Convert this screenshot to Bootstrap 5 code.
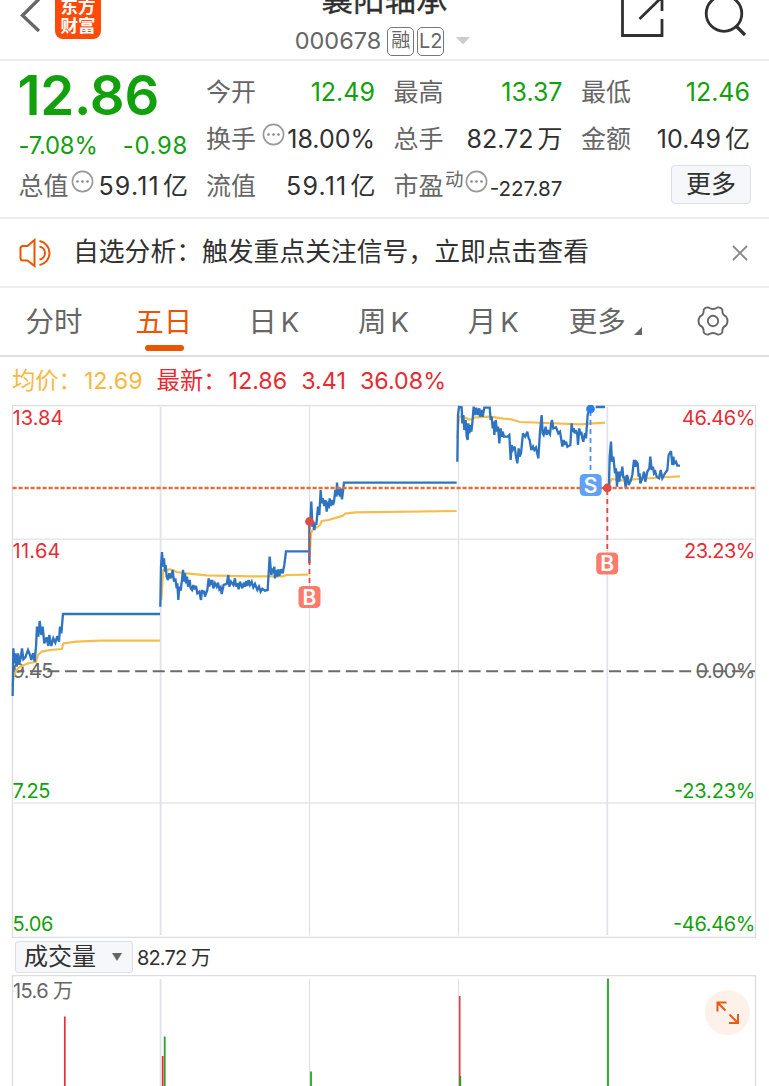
<!DOCTYPE html>
<html lang="zh-CN">
<head>
<meta charset="utf-8">
<meta name="viewport" content="width=device-width, initial-scale=1">
<title>襄阳轴承 000678</title>
<link href="https://cdn.jsdelivr.net/npm/bootstrap@5.3.0/dist/css/bootstrap.min.css" rel="stylesheet">
<style>
body{font-family:Inter,"Noto Sans CJK SC",sans-serif;color:#303030;height:1086px;overflow:hidden;background:#fff}
svg{display:block;flex:none}
.c-up{color:#e62c33}.c-down{color:#12a10d}.c-grey{color:#666}.c-avg{color:#f8b83f}
.topbar{height:61px;border-bottom:2px solid #ebebeb}
.side{width:210px}
.logo{width:46px;height:46px;border-radius:8px;background:#ff4a0a;color:#fff;font-size:17.5px;line-height:19px;font-weight:700;padding-top:4px;margin:0 0 20px 14px}
.stock-name{font-size:31.5px;line-height:36px;font-weight:400;-webkit-text-stroke:.3px #303030;margin-bottom:8px}
.stock-code{height:30px;gap:3px;margin-bottom:3px}
.code-num{font-size:23.5px;line-height:30px;margin-right:4px}
.tagbox{border:1.5px solid #777;border-radius:5px;height:29px;width:27px;font-size:19px;line-height:26px;text-align:center;position:relative;right:1px}
.tagbox.lv{font-size:20px;line-height:27px}
.quote{height:158px;border-bottom:2px solid #ededed;padding:8px 19px 0 18.5px;gap:18.6px}
.qcol{flex:1 1 0;min-width:0}
.qrow{height:47px;font-size:25px;line-height:47px;white-space:nowrap}
.wide{letter-spacing:1.2px;margin-right:-.5px}
.unit{margin-left:3px;letter-spacing:0}
.price{font-size:54.5px;line-height:52px;font-weight:600;height:60px;white-space:nowrap;letter-spacing:-.2px;margin-left:-1px}
.chg{font-size:23.8px;height:34px;line-height:33px;letter-spacing:-.2px}
.chg .amt{letter-spacing:.7px;margin-right:-.4px}
.pe{font-size:20.6px;padding-top:4px}
.sup{font-size:18.5px;margin-top:-14px}
.dots{margin-top:-10px}
.btn-more{width:80px;height:39px;margin:-4px -1px 0 0;font-size:25px;line-height:35px;background:#f5f7fa;border:1.5px solid #dcdfe4;border-radius:4px;color:#303030}
.notice{height:69px;border-bottom:2px solid #ededed;padding:0 20px 0 19px;font-size:25.8px}
.tabs{display:grid;grid-template-columns:repeat(7,1fr);height:69px;border-bottom:2px solid #dedede;font-size:28.5px}
.tabs>div{display:flex;justify-content:center;align-items:center;position:relative;white-space:nowrap;right:1px;padding-top:2px}
.tabs .k{margin-left:4px;font-size:27.5px}
.tabs .on{color:#ea5504}
.tabs .on::after{content:"";position:absolute;bottom:4px;left:50%;width:39px;height:6px;margin-left:-19px;border-radius:3px;background:#ea5504}
.legend-row{height:48px;padding-left:12px;font-size:23.3px;white-space:nowrap}
.legend-row .gap-s{margin-right:14px}
.legend-row .lab{margin-right:2px}
.volbar{height:37px;padding-left:15px}
.picker{width:118px;height:32px;background:#f5f7fa;border:1.5px solid #dcdfe4;border-radius:3px;font-size:24px;line-height:30px;padding:1px 10px 0 8px}
.expand{width:45px;height:45px;border-radius:50%;background:#fdf1e9;top:15px;right:19.5px}
svg text{font-family:Inter,"Noto Sans CJK SC",sans-serif}
</style>
</head>
<body>
<header class="topbar d-flex justify-content-between align-items-end">
  <div class="side d-flex align-items-end">
    <svg width="41" height="61" viewBox="0 0 41 61"><path d="M39 1 22.500 17.500 39 33" fill="none" stroke="#666" stroke-width="3.300"/></svg>
    <div class="logo text-center">东方<br>财富</div>
  </div>
  <div class="d-flex flex-column align-items-center">
    <div class="stock-name">襄阳轴承</div>
    <div class="stock-code d-flex align-items-center c-grey">
      <span class="code-num">000678</span><span class="tagbox">融</span><span class="tagbox lv">L2</span>
      <svg class="ms-2" width="18" height="8" viewBox="0 0 18 8"><path d="M0 0h14L7 7.500z" fill="#ccc"/></svg>
    </div>
  </div>
  <div class="side d-flex justify-content-end">
    <svg width="148" height="59" viewBox="621 0 148 59" fill="none" stroke="#303030" stroke-width="2.800"><path d="M622.500-5V35.500H662V19M662 11V-6M639.500 19 662-3"/><circle cx="724" cy="13.500" r="17.800"/><path d="m735.500 25.500 9.500 9.500" stroke-width="3.200"/></svg>
  </div>
</header>

<section class="quote d-flex">
  <div class="qcol">
    <div class="price c-down">12.86</div>
    <div class="chg d-flex justify-content-between c-down"><span>-7.08%</span><span class="amt">-0.98</span></div>
    <div class="qrow d-flex align-items-center"><span class="c-grey">总值</span><svg class="dots ms-auto" width="23" height="23" viewBox="0 0 23 23"><use href="#dots"/></svg><span class="wide ms-1">59.11<span class="unit">亿</span></span></div>
  </div>
  <div class="qcol">
    <div class="qrow d-flex justify-content-between"><span class="c-grey">今开</span><span class="c-down">12.49</span></div>
    <div class="qrow d-flex justify-content-between align-items-center"><span class="c-grey">换手</span><svg class="dots ms-1" width="23" height="23" viewBox="0 0 23 23"><use href="#dots"/></svg><span>18.00%</span></div>
    <div class="qrow d-flex justify-content-between"><span class="c-grey">流值</span><span class="wide">59.11<span class="unit">亿</span></span></div>
  </div>
  <div class="qcol">
    <div class="qrow d-flex justify-content-between"><span class="c-grey">最高</span><span class="c-down">13.37</span></div>
    <div class="qrow d-flex justify-content-between"><span class="c-grey">总手</span><span>82.72<span class="unit ms-1">万</span></span></div>
    <div class="qrow d-flex justify-content-between align-items-center"><span class="c-grey">市盈</span><span class="sup c-grey">动</span><svg class="dots" width="23" height="23" viewBox="0 0 23 23"><use href="#dots"/></svg><span class="pe">-227.87</span></div>
  </div>
  <div class="qcol">
    <div class="qrow d-flex justify-content-between"><span class="c-grey">最低</span><span class="c-down">12.46</span></div>
    <div class="qrow d-flex justify-content-between"><span class="c-grey">金额</span><span>10.49<span class="unit ms-1">亿</span></span></div>
    <div class="qrow d-flex justify-content-end align-items-center"><button class="btn-more p-0">更多</button></div>
  </div>
</section>

<section class="notice d-flex align-items-center">
  <svg width="34" height="30" viewBox="0 0 34 30" fill="none" stroke="#ea5504" stroke-width="2"><path d="M15.500 2v26L8.500 22.500H4Q1.500 22.500 1.500 20V10.500Q1.500 8 4 8H8.500Z"/><path d="M20.500 8.500a6.600 6.600 0 0 1 0 13M20.500 3a12.200 12.200 0 0 1 0 24"/></svg>
  <span class="flex-grow-1 ps-3 ms-1">自选分析：触发重点关注信号，立即点击查看</span>
  <svg width="18" height="18" viewBox="0 0 18 18"><path d="m2 2 14 14M16 2 2 16" stroke="#888" stroke-width="1.800"/></svg>
</section>

<nav class="tabs c-grey">
  <div>分时</div><div class="on">五日</div><div>日<span class="k">K</span></div><div>周<span class="k">K</span></div><div>月<span class="k">K</span></div>
  <div><span class="ms-1">更多</span><svg class="ms-2 mt-3" width="8" height="8" viewBox="0 0 8 8"><path d="M8 0v8H0z" fill="#666"/></svg></div>
  <div><svg class="mb-1" width="32" height="32" viewBox="-16 -16 32 32" fill="none" stroke="#666" stroke-width="1.900" stroke-linejoin="round"><circle r="5.200"/><path d="M-4.500-13.500Q0-10.500 4.500-13.500Q7.500-14 9.300-11.500Q9-6 13-4.500Q16 0 13 4.500Q9 6 9.300 11.500Q7.500 14 4.500 13.500Q0 10.500-4.500 13.500Q-7.500 14-9.300 11.500Q-9 6-13 4.500Q-16 0-13-4.500Q-9-6-9.300-11.500Q-7.500-14-4.500-13.500Z"/></svg></div>
</nav>

<div class="legend-row d-flex align-items-center c-up">
  <span class="c-avg lab">均价：</span><span class="c-avg gap-s">12.69</span><span class="lab">最新：</span><span class="gap-s">12.86</span><span class="gap-s">3.41</span><span>36.08%</span>
</div>

<svg width="769" height="533" viewBox="0 405 769 533" font-size="20">
  <path d="M12 405.500H755.500V937.500H12.500V405.500" fill="none" stroke="#dcdde2" stroke-width="1.300"/>
  <path d="M12 539.200H755M12 803H755" stroke="#e6e6ed" stroke-width="1.600"/>
  <path d="M160.600 407V935M607.300 407V935" stroke="#e2e2ea" stroke-width="1.800"/><path d="M309.500 407V935M458.500 407V935" stroke="#dedee5" stroke-width="1.100"/>
  <g fill="#e62c33"><text x="12.500" y="425" textLength="51">13.84</text><text x="12.500" y="557.500" textLength="48">11.64</text><text x="682" y="425" textLength="73.500">46.46%</text><text x="684" y="557.500" textLength="71.500">23.23%</text></g>
  <g fill="#666"><text x="12.500" y="677.500" textLength="41">9.45</text><text x="695.500" y="677.500" textLength="60">0.00%</text></g>
  <g fill="#12a10d"><text x="12.500" y="797.500" textLength="38">7.25</text><text x="12.500" y="930.500" textLength="41">5.06</text><text x="674" y="797.500" textLength="81.500">-23.23%</text><text x="673" y="930.500" textLength="82.500">-46.46%</text></g>
  <path d="M12.300 671.300H755" stroke="#6b6b6b" stroke-width="2" stroke-dasharray="12 5.550"/>
  <!-- average price, one path per trading day, drawn at three units per pixel -->
  <g fill="none" stroke="#f6bd4a" stroke-width="6.500" stroke-linejoin="round">
    <path transform="translate(0 400) scale(.3333)" d="M38 860C40 800 60 800 85 790L108 786L114 765L125 755L150 750L186 747L190 730L230 725L300 722L480 722"/>
    <path transform="translate(150 400) scale(.3333)" d="M34 600L40 510L60 508L80 516L110 520L170 526L300 529L400 529L410 525L475 524"/>
    <path transform="translate(295 400) scale(.3333)" d="M43 490L48 400L55 385L66 382L75 375L80 363L100 360L125 353L144 347L150 341L180 337L485 333"/>
    <path transform="translate(450 395) scale(.3333)" d="M22 130L27 65L40 65L60 74L72 68L120 65L160 71L180 72L210 81L290 84L390 88L430 85L465 83"/>
    <path transform="translate(595 395) scale(.3333)" d="M42 270L50 252L80 256L130 252L220 246L255 244"/>
  </g>
  <!-- traded price -->
  <g fill="none" stroke="#2f74c0" stroke-width="7" stroke-linejoin="miter" stroke-miterlimit="3">
    <path transform="translate(0 400) scale(.3333)" d="M38 888L40 745L43 790L46 760L50 800L54 760L58 790L62 775L66 745L70 778L76 772L84 750L90 765L94 780L99 760L104 785L108 740L111 680L115 710L119 663L124 705L128 680L133 730L140 712L145 738L148 705L154 738L160 715L166 728L172 708L177 725L180 680L184 700L189 642H480"/>
    <path transform="translate(150 400) scale(.3333)" d="M31 620L33 500L36 456L39 500L42 475L45 515L47 495L50 530L54 540L58 520L63 535L68 510L72 545L76 535L80 565L82 550L85 600L88 560L92 572L96 540L99 510L103 545L105 520L108 550L111 530L114 560L119 540L122 565L126 570L130 555L134 568L138 558L142 580L148 575L153 600L156 570L159 580L162 572L165 590L172 570L176 535L178 560L181 540L185 555L187 540L190 565L195 550L200 560L204 548L208 568L212 562L215 582L221 555L230 552L235 525L238 560L243 545L250 555L255 535L258 560L262 550L266 568L270 545L277 565L281 548L285 560L289 543L292 558L296 540L300 555L305 545L310 562L315 552L322 570L327 560L332 575L337 566L345 572L353 570L359 470L364 525L367 505L370 520L373 500L375 535L379 510L382 530L385 508L388 528L393 508L398 520L403 495L408 454H475"/>
    <path transform="translate(295 400) scale(.3333)" d="M43 490V365L46 370L49 305L52 380L55 365L58 390L61 368L64 375L69 320L73 345L77 270L80 310L83 295L88 318L92 300L95 335L98 305L101 325L104 295L107 318L110 300L114 315L117 305L121 270L124 290L126 248L129 285L132 262L135 290L137 265L141 298L147 248H485"/>
    <path transform="translate(450 395) scale(.3333)" d="M22 200L24 60L27 36L35 37L37 85L40 60L43 105L47 75L50 125L53 135L55 85L58 115L62 90L64 110L67 85L71 35L75 60L79 38L83 60L88 40L90 65L94 45L98 65L103 38H119L122 75L125 65L128 100L131 80L133 120L137 75L141 110L144 95L148 145L152 100L155 125L158 110L162 125L172 125L178 120L182 195L185 150L188 165L194 155L198 185L202 205L206 160L209 185L213 175L219 115L222 120L226 125L232 110L236 130L239 135L244 165L249 155L253 165L258 158L265 190L270 110L275 60L278 115L281 120L287 95L290 120L293 105L296 112L300 118L303 90L306 75L310 100L318 97L325 115L330 110L334 135L337 155L341 135L345 150L348 140L352 155L361 150L365 85L368 110L371 100L374 115L378 105L382 120L384 150L388 100L391 120L394 110L397 130L400 140L405 115L408 130L413 60L418 42M437 36H465"/>
    <path transform="translate(595 395) scale(.3333)" d="M42 270L44 185L48 140L51 200L55 185L60 235L63 220L66 275L69 230L73 260L76 230L79 235L82 215L85 250L88 245L92 278L95 240L98 245L101 270L107 258L112 240L117 195L121 215L124 200L128 205L131 245L134 235L136 265L142 250L147 230L151 260L157 230L163 220L166 185L170 225L174 215L177 235L181 230L185 245L192 250L197 225L202 250L210 235L217 225L221 180L228 168L232 210L235 185L238 205L243 200L247 212H255"/>
  </g>
  <path d="M12.500 488H755" stroke="#e2703a" stroke-width="2.500" stroke-dasharray="4.200 1.800"/>
  <g fill="none" stroke-width="1.800" stroke-dasharray="5 4"><path d="M309.500 524V586M607.300 490V552" stroke="#e04a43"/><path d="M590.500 411V474" stroke="#4e8fee"/></g>
  <g fill="#df4c48"><circle cx="309.500" cy="521.500" r="4.400"/><circle cx="607.300" cy="488" r="4.400"/></g><circle cx="590.500" cy="409" r="4.400" fill="#2c7df0"/>
  <g font-size="21" font-weight="600" text-anchor="middle">
    <rect x="298.500" y="586" width="22" height="22" rx="4.500" fill="#fa7d6c"/><text x="309.500" y="604.600" fill="#fff">B</text>
    <rect x="596.200" y="552.500" width="22" height="22" rx="4.500" fill="#fa7d6c"/><text x="607.200" y="571.200" fill="#fff">B</text>
    <rect x="579.700" y="474" width="22" height="22" rx="4.500" fill="#5fa2f8"/><text x="590.700" y="492.600" fill="#fff">S</text>
  </g>
  <path d="M580 488H601" stroke="#e2703a" stroke-width="1.500" stroke-dasharray="4 2" opacity=".25"/>
</svg>

<div class="volbar d-flex align-items-center">
  <div class="picker d-flex align-items-center justify-content-between"><span>成交量</span><svg width="10" height="8" viewBox="0 0 10 8"><path d="M0 0h10L5 8z" fill="#666"/></svg></div>
  <svg class="ms-1" width="80" height="30" viewBox="137 942 80 30"><text x="137" y="964.500" font-size="20" fill="#303030" textLength="74">82.72 万</text></svg>
</div>

<div class="position-relative">
  <svg width="769" height="111" viewBox="0 975 769 111">
    <path d="M12.500 1086V975.700H755.500V1086" fill="none" stroke="#dcdde2" stroke-width="1.300"/>
    <path d="M160.600 979V1086M607.300 979V1086" stroke="#e2e2ea" stroke-width="1.800"/><path d="M309.500 979V1086M458.500 979V1086" stroke="#dedee5" stroke-width="1.100"/>
    <text x="13" y="997.500" font-size="20" fill="#666" textLength="60">15.6 万</text>
    <g stroke="#f02b2f" stroke-width="1.700"><path d="M64.800 1016.500V1086M162.700 1056V1086"/><path d="M459.700 996V1086" stroke="#d4484d"/></g>
    <path d="M164.700 1036.500V1086M311 1071.500V1086M460.300 1076V1086M608 978.500V1086" stroke="#27a127" stroke-width="1.800"/>
  </svg>
  <div class="expand position-absolute d-flex align-items-center justify-content-center">
    <svg width="23" height="23" viewBox="0 0 23 23" fill="none" stroke="#ea5a14" stroke-width="2"><path d="M1.500 10.500V1.500H10.500M2 2 9.500 9.500M13 22H22V13M21.500 21.500 13.500 13.500"/></svg>
  </div>
</div>

<svg width="0" height="0" class="position-absolute"><defs><g id="dots"><circle cx="11.500" cy="11.500" r="10.100" fill="none" stroke="#999" stroke-width="1.600"/><g fill="#888"><circle cx="6.500" cy="11.500" r="1.300"/><circle cx="11.500" cy="11.500" r="1.300"/><circle cx="16.500" cy="11.500" r="1.300"/></g></g></defs></svg>
<script src="https://cdn.jsdelivr.net/npm/bootstrap@5.3.0/dist/js/bootstrap.bundle.min.js"></script>
</body>
</html>
